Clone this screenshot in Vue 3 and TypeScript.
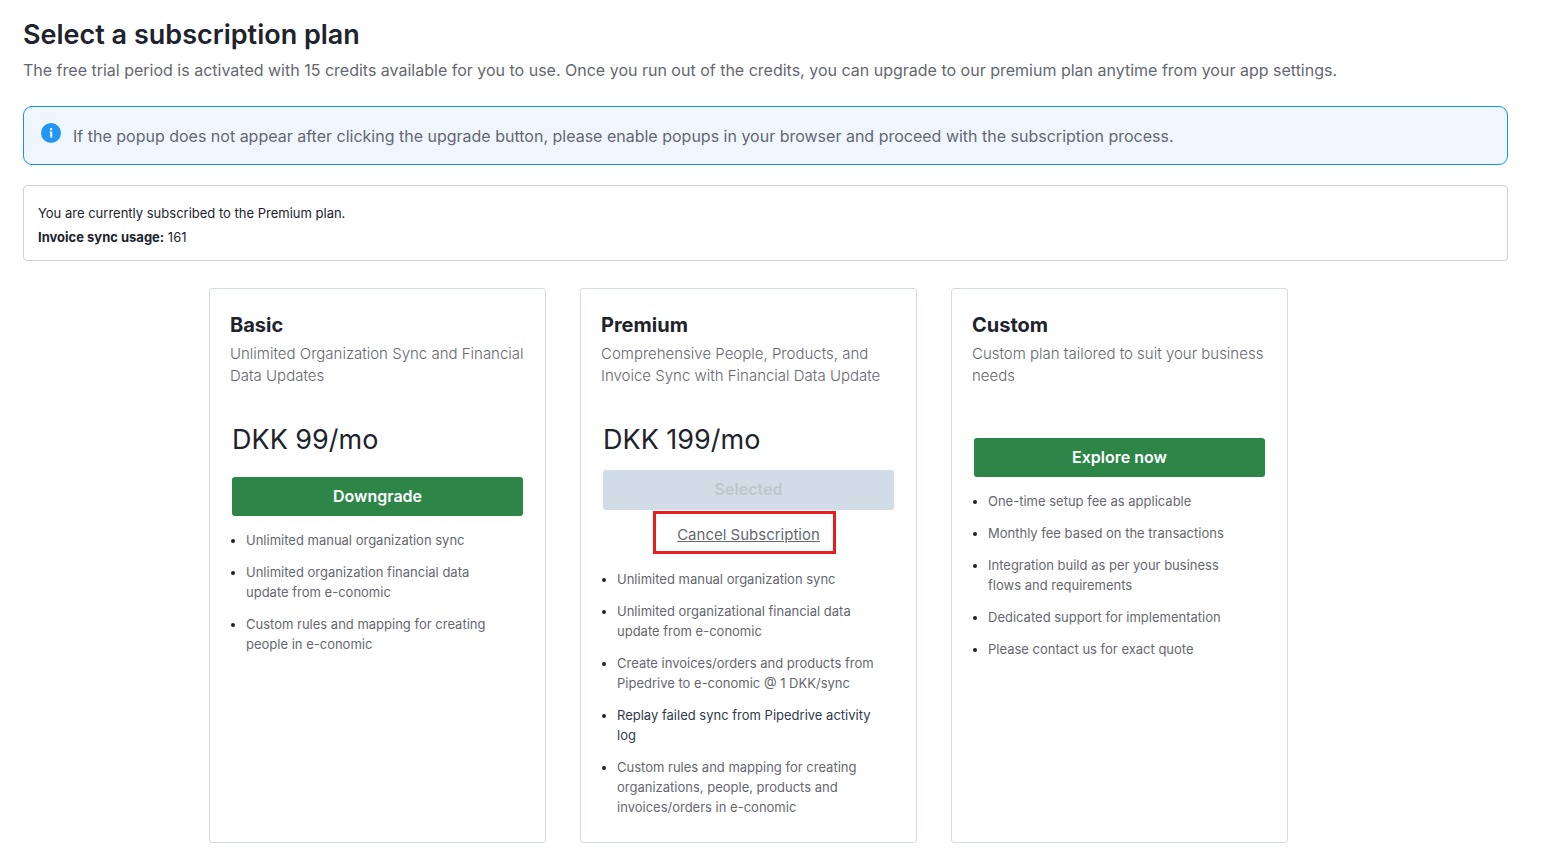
<script setup lang="ts">
interface Feature {
  text: string
  strong?: boolean
}

interface Plan {
  name: string
  summary: string
  price?: string
  action: string
  current?: boolean
  features: Feature[]
}

const currentPlan = 'Premium'
const invoiceUsage = 161

const plans: Plan[] = [
  {
    name: 'Basic',
    summary: 'Unlimited Organization Sync and Financial Data Updates',
    price: 'DKK 99/mo',
    action: 'Downgrade',
    features: [
      { text: 'Unlimited manual organization sync' },
      { text: 'Unlimited organization financial data update from e-conomic' },
      { text: 'Custom rules and mapping for creating people in e-conomic' },
    ],
  },
  {
    name: 'Premium',
    summary: 'Comprehensive People, Products, and Invoice Sync with Financial Data Update',
    price: 'DKK 199/mo',
    action: 'Selected',
    current: true,
    features: [
      { text: 'Unlimited manual organization sync' },
      { text: 'Unlimited organizational financial data update from e-conomic' },
      { text: 'Create invoices/orders and products from Pipedrive to e-conomic @ 1 DKK/sync' },
      { text: 'Replay failed sync from Pipedrive activity log', strong: true },
      { text: 'Custom rules and mapping for creating organizations, people, products and invoices/orders in e-conomic' },
    ],
  },
  {
    name: 'Custom',
    summary: 'Custom plan tailored to suit your business needs',
    action: 'Explore now',
    features: [
      { text: 'One-time setup fee as applicable' },
      { text: 'Monthly fee based on the transactions' },
      { text: 'Integration build as per your business flows and requirements' },
      { text: 'Dedicated support for implementation' },
      { text: 'Please contact us for exact quote' },
    ],
  },
]
</script>

<template>
  <main class="page">
    <header class="intro">
      <h1>Select a subscription plan</h1>
      <p>
        The free trial period is activated with 15 credits available for you to use. Once you run out of the
        credits, you can upgrade to our premium plan anytime from your app settings.
      </p>
    </header>

    <div class="notice" role="note">
      <svg class="notice-icon" viewBox="0 0 20 20" aria-hidden="true">
        <circle cx="10" cy="10" r="10" fill="#2196f3" />
        <rect x="9" y="5.2" width="2.2" height="2" fill="#fff" />
        <path d="M8.6 8.4H11.2V14.4H9.2V9.6H8.6Z" fill="#fff" />
      </svg>
      <p>
        If the popup does not appear after clicking the upgrade button, please enable popups in your browser and
        proceed with the subscription process.
      </p>
    </div>

    <section class="status">
      <p>You are currently subscribed to the {{ currentPlan }} plan.</p>
      <p><strong>Invoice sync usage:</strong> {{ invoiceUsage }}</p>
    </section>

    <section class="plans">
      <article v-for="plan in plans" :key="plan.name" class="plan">
        <h2>{{ plan.name }}</h2>
        <p class="summary">{{ plan.summary }}</p>
        <p v-if="plan.price" class="price">{{ plan.price }}</p>
        <button
          type="button"
          class="action"
          :class="{ selected: plan.current, unpriced: !plan.price }"
          :disabled="plan.current"
        >
          {{ plan.action }}
        </button>
        <div v-if="plan.current" class="cancel">
          <span class="cancel-box">
            <a href="#">Cancel Subscription</a>
            <span class="highlight" aria-hidden="true"></span>
          </span>
        </div>
        <ul class="features">
          <li v-for="feature in plan.features" :key="feature.text">
            <span :class="{ strong: feature.strong }">{{ feature.text }}</span>
          </li>
        </ul>
      </article>
    </section>
  </main>
</template>

<style>
body {
  margin: 0;
  background: #fff;
}
</style>

<style scoped>
.page {
  padding: 15px 59px 12px 23px;
  color: #21232c;
  font-family: Inter, 'Liberation Sans', sans-serif;
  font-size: 13px;
}

h1,
h2,
p,
ul {
  margin: 0;
}

h1 {
  font-size: 27px;
  font-weight: 600;
  line-height: 40px;
}

.intro p,
.notice p {
  color: #65686f;
  font-size: 16px;
}

.intro p {
  margin-top: 3px;
  line-height: 24px;
}

.notice {
  display: flex;
  gap: 12px;
  margin-top: 24px;
  padding: 16px 17px 15px;
  border: 1px solid #1892e6;
  border-radius: 9px;
  background: #eff6ff;
}

.notice p {
  line-height: 26px;
}

.notice-icon {
  flex: none;
  width: 20px;
  height: 20px;
}

.status {
  margin-top: 20px;
  padding: 15px 14px 11px;
  border: 1px solid #d0d1d2;
  border-radius: 4px;
  line-height: 24px;
}

.status strong {
  font-weight: 700;
}

.plans {
  display: flex;
  justify-content: center;
  gap: 34px;
  margin-top: 27px;
  padding-right: 34px;
}

.plan {
  box-sizing: border-box;
  flex: 0 1 337px;
  padding: 22px 20px 25px;
  border: 1px solid #d3dbe3;
  border-radius: 3px;
}

h2 {
  font-size: 20px;
  font-weight: 700;
  line-height: 28px;
}

.summary {
  margin-top: 4px;
  color: #65686f;
  font-size: 15px;
  font-weight: 300;
  line-height: 22px;
}

.price {
  margin: 35px 2px 0;
  font-size: 27px;
  line-height: 36px;
}

.action {
  display: block;
  width: calc(100% - 4px);
  height: 39px;
  margin: 19px 2px 0;
  padding: 0 0 2px;
  border: 0;
  border-radius: 3px;
  background: #2d8648;
  color: #fff;
  font-family: inherit;
  font-size: 16px;
  font-weight: 600;
}

.action.unpriced {
  margin-top: 51px;
}

.action.selected {
  height: 40px;
  margin-top: 12px;
  background: #d2dce6;
  color: #bfc5cd;
}

.cancel {
  display: flex;
  justify-content: center;
  margin: 15px 0 24px;
}

.cancel-box {
  position: relative;
  font-size: 15px;
  line-height: 20px;
}

.cancel a {
  color: #65686f;
  text-decoration: underline;
}

.highlight {
  position: absolute;
  inset: -14px -16px -9px -24px;
  border: 3px solid #e81e1e;
  pointer-events: none;
}

.features {
  display: grid;
  gap: 12px;
  margin-top: 14px;
  padding: 0 18px 0 16px;
  line-height: 20px;
}

.features span {
  color: #65686f;
}

.features .strong {
  color: #2f3b4c;
}
</style>
